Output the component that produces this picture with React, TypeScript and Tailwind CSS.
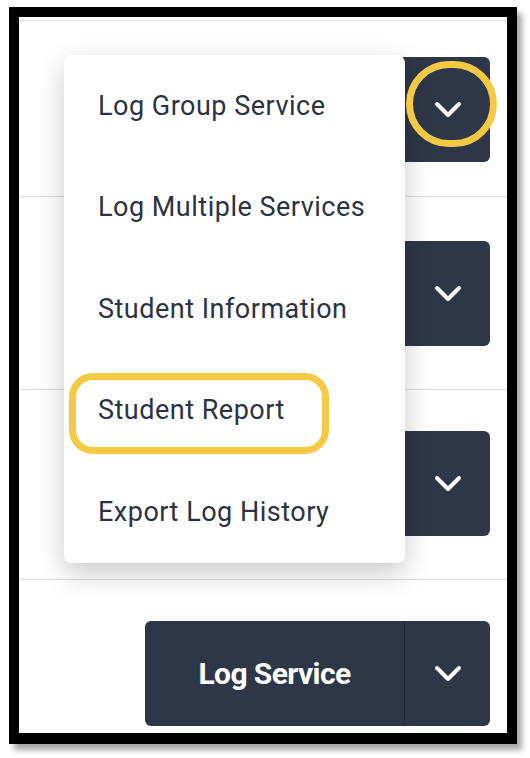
const rows = [
  { pt: 'pt-[36px]', pb: 'pb-[34px]', border: true, label: false },
  { pt: 'pt-[44px]', pb: 'pb-[43px]', border: true, label: false },
  { pt: 'pt-[41px]', pb: 'pb-[43px]', border: true, label: false },
  { pt: 'pt-[41px]', pb: 'pb-[9px]', border: false, label: true },
];

const menuItems = [
  'Log Group Service',
  'Log Multiple Services',
  'Student Information',
  'Student Report',
  'Export Log History',
];

const Chevron = () => (
  <svg width="28" height="17" viewBox="0 0 28 17" fill="none">
    <polyline
      points="3,3 14,14 25,3"
      stroke="white"
      strokeWidth="4"
      strokeLinecap="round"
      strokeLinejoin="round"
    />
  </svg>
);

// rows under the open menu have their label hidden by it
const SplitButton = ({ label }: { label: boolean }) => (
  <div className="flex h-[105px] rounded-[6px] bg-[#2e3747] text-white">
    <button className="w-[260px] flex items-center justify-center border-r border-[#1c2230] text-[30px] font-bold tracking-[-0.6px]">
      {label ? 'Log Service' : ''}
    </button>
    <button className="w-[85px] flex items-center justify-center">
      <Chevron />
    </button>
  </div>
);

export default function App() {
  return (
    <div
      className="w-[530px] h-[758px] bg-white overflow-hidden pl-[9px] pt-[7px]"
      style={{ fontFamily: 'Roboto, "Noto Sans", sans-serif' }}
    >
      <div className="relative w-[508px] h-[737px] border-[10px] border-b-[11px] border-black shadow-[5px_6px_6px_rgba(0,0,0,0.35)]">
        <div className="h-full bg-white pt-[3px] flex flex-col">
          <div className="border-t border-[#e3e3e3]">
            {rows.map((r, i) => (
              <div
                key={i}
                className={`flex justify-end pr-[17px] ${r.pt} ${r.pb} ${r.border ? 'border-b border-[#dcdcdc]' : ''}`}
              >
                <SplitButton label={r.label} />
              </div>
            ))}
          </div>
        </div>

        {/* dropdown menu */}
        <div className="absolute left-[45px] top-[38px] w-[341px] rounded-[8px] bg-white shadow-[0_10px_28px_rgba(0,0,0,0.22)] flex flex-col">
          {menuItems.map((item) => (
            <div
              key={item}
              className="h-[101.6px] flex items-center pl-[34px] text-[27px] text-[#2b3343] tracking-[0.5px]"
            >
              {item}
            </div>
          ))}
        </div>

        {/* annotations */}
        <div className="absolute left-[387px] top-[44px] w-[91px] h-[86px] rounded-full border-[7px] border-[#f6c945]" />
        <div className="absolute left-[50px] top-[356px] w-[260px] h-[81px] rounded-[24px] border-[7px] border-[#f6c945]" />
      </div>
    </div>
  );
}
